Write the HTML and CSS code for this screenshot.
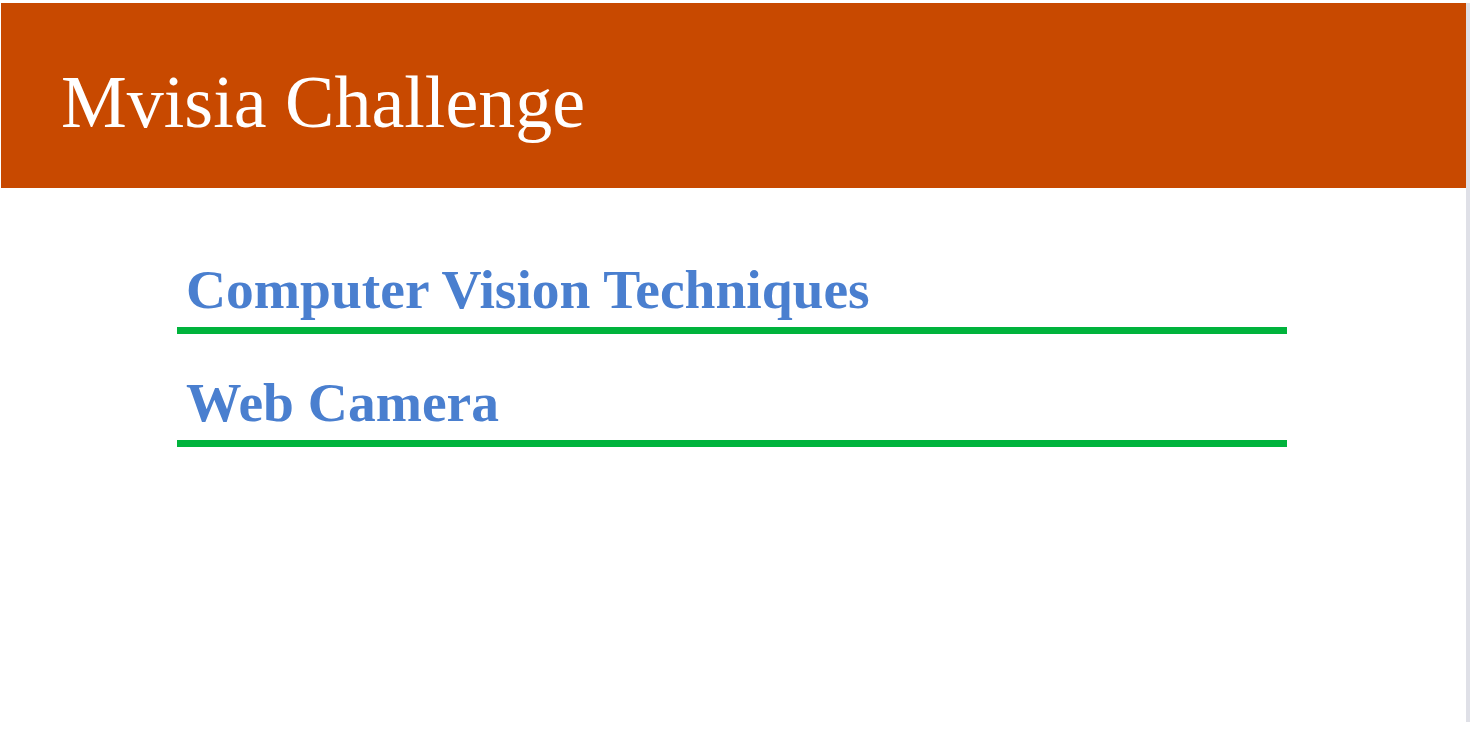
FILE: index.html
```html
<!DOCTYPE html>
<html lang="en">
<head>
<meta charset="utf-8">
<title>Mvisia Challenge</title>
<link rel="stylesheet" href="styles.css">
</head>
<body>
<div class="frame">
  <div class="page">
    <header class="header">
      <h1 class="title">Mvisia Challenge</h1>
    </header>
    <main class="menu">
      <a class="item" href="#">Computer Vision Techniques</a>
      <a class="item" href="#">Web Camera</a>
    </main>
  </div>
  <div class="scrollbar"></div>
</div>
</body>
</html>
```
FILE: styles.css
```css
html, body {
  margin: 0;
  padding: 0;
  background: #ffffff;
}
.frame {
  display: flex;
  margin-top: 3px;
  margin-left: 1px;
}
.page {
  flex: 1;
  min-width: 0;
}
.scrollbar {
  width: 4px;
  height: 719px;
  background: #dfe0e7;
  flex: none;
}
.header {
  background: #c84900;
  height: 185px;
  box-sizing: border-box;
  padding: 62px 0 0 60px;
}
.title {
  margin: 0;
  font-family: "Liberation Serif", "Times New Roman", serif;
  font-weight: normal;
  font-size: 74px;
  line-height: 74px;
  color: #ffffff;
}
.menu {
  display: flex;
  flex-direction: column;
  gap: 37px;
  padding: 70px 0 0 176px;
  width: 1110px;
}
.item {
  display: block;
  font-family: "Liberation Serif", "Times New Roman", serif;
  font-weight: bold;
  font-size: 55.5px;
  line-height: 64px;
  color: #4a7fcf;
  text-decoration: none;
  padding: 0 0 5px 9px;
  border-bottom: 7px solid #00b33c;
}
```
